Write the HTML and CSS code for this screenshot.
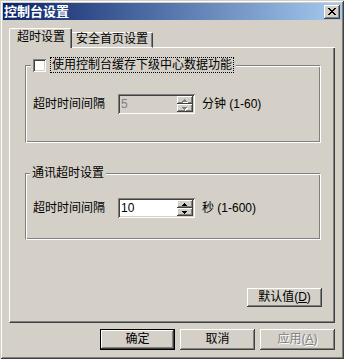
FILE: index.html
```html
<!DOCTYPE html>
<html>
<head>
<meta charset="utf-8">
<link rel="stylesheet" href="styles.css">
</head>
<body>
<div class="window">
  <div class="titlebar">
    <span class="title">控制台设置</span>
    <span class="close"><svg width="8" height="7" viewBox="0 0 8 7" shape-rendering="crispEdges"><path d="M0 0h2v1H0zM6 0h2v1H6zM1 1h2v1H1zM5 1h2v1H5zM2 2h4v1H2zM3 3h2v1H3zM2 4h4v1H2zM1 5h2v1H1zM5 5h2v1H5zM0 6h2v1H0zM6 6h2v1H6z" fill="#000"/></svg></span>
  </div>
  <div class="tabs">
    <div class="tab active">超时设置</div>
    <div class="tab">安全首页设置</div>
    <div class="tab-fill"></div>
  </div>
  <div class="panel">
    <div class="group g1">
      <div class="legend check-legend">
        <span class="checkbox"></span>
        <span class="focus">使用控制台缓存下级中心数据功能</span>
      </div>
      <div class="row r1">
        <span class="label">超时时间间隔</span>
        <div class="spin disabled">
          <span class="value">5</span>
          <span class="updown">
            <span class="arrow"><svg width="5" height="3" viewBox="0 0 5 3" shape-rendering="crispEdges"><path d="M2 0h1v1h1v1h1v1H0V2h1V1h1z"/></svg></span>
            <span class="arrow"><svg width="5" height="3" viewBox="0 0 5 3" shape-rendering="crispEdges"><path d="M0 0h5v1H4v1H3v1H2V2H1V1H0z"/></svg></span>
          </span>
        </div>
        <span class="unit">分钟 (1-60)</span>
      </div>
    </div>
    <div class="group g2">
      <div class="legend text-legend">通讯超时设置</div>
      <div class="row r2">
        <span class="label">超时时间间隔</span>
        <div class="spin">
          <span class="value">10</span>
          <span class="updown">
            <span class="arrow"><svg width="5" height="3" viewBox="0 0 5 3" shape-rendering="crispEdges"><path d="M2 0h1v1h1v1h1v1H0V2h1V1h1z"/></svg></span>
            <span class="arrow"><svg width="5" height="3" viewBox="0 0 5 3" shape-rendering="crispEdges"><path d="M0 0h5v1H4v1H3v1H2V2H1V1H0z"/></svg></span>
          </span>
        </div>
        <span class="unit">秒 (1-600)</span>
      </div>
    </div>
    <div class="btn btn-defaults">默认值(<u>D</u>)</div>
  </div>
  <div class="buttons">
    <div class="btn btn-main default">确定</div>
    <div class="btn btn-main">取消</div>
    <div class="btn btn-main off">应用(<u>A</u>)</div>
  </div>
</div>
</body>
</html>
```

FILE: styles.css
```css
* { box-sizing: border-box; }
html, body { margin: 0; padding: 0; }
body {
  width: 344px;
  height: 359px;
  background: #d4d0c8;
  font-family: "Liberation Sans", "Noto Sans CJK SC", sans-serif;
  font-size: 12px;
  color: #000;
  overflow: hidden;
}
.window {
  width: 344px;
  height: 359px;
  padding: 3px 2px 3px 3px;
  background: #d4d0c8;
  box-shadow: inset 1px 1px #d4d0c8, inset -1px -1px #404040, inset 2px 2px #fff, inset -2px -2px #808080;
  display: flex;
  flex-direction: column;
}
.titlebar {
  height: 17px;
  display: flex;
  align-items: center;
  justify-content: space-between;
  background: linear-gradient(to right, #0a246a, #a6caf0);
  padding-left: 1px;
}
.title {
  color: #fff;
  font-weight: bold;
  font-size: 13px;
  line-height: 15px;
}
.close {
  width: 16px;
  height: 14px;
  margin-right: 2px;
  background: #d4d0c8;
  box-shadow: inset -1px -1px #404040, inset 1px 1px #fff, inset -2px -2px #808080;
  display: flex;
  align-items: center;
  justify-content: center;
  padding: 0 1px 1px 0;
}
.close svg { display: block; }

.tabs {
  margin-top: 8px;
  margin-left: 6px;
  width: 326px;
  height: 20px;
  display: flex;
  align-items: flex-end;
}
.tab {
  background: #d4d0c8;
  border-top: 1px solid #fff;
  border-right: 1px solid #404040;
  border-radius: 2px 2px 0 0;
  box-shadow: inset -1px 0 #808080;
  white-space: nowrap;
}
.tab.active {
  width: 63px;
  height: 20px;
  border-left: 1px solid #fff;
  padding: 1px 0 0 7px;
  line-height: 14px;
}
.tab:not(.active) {
  width: 81px;
  height: 16px;
  padding-left: 4px;
  line-height: 12px;
  border-bottom: 1px solid #fff;
  border-top-left-radius: 0;
}
.tab-fill {
  flex: 1;
  border-bottom: 1px solid #fff;
}

.panel {
  margin-left: 6px;
  width: 326px;
  height: 275px;
  border-left: 1px solid #fff;
  border-right: 1px solid #404040;
  border-bottom: 1px solid #404040;
  box-shadow: inset -1px -1px #808080;
  display: flex;
  flex-direction: column;
  align-items: flex-start;
}
.group {
  width: 296px;
  margin-left: 15px;
  border-top: 1px solid #808080;
  border-left: 1px solid #808080;
  border-right: 1px solid #fff;
  border-bottom: 1px solid #fff;
  box-shadow: inset 1px 1px #fff, inset -1px -1px #808080;
  display: flex;
  flex-direction: column;
  align-items: flex-start;
}
.g1 { margin-top: 17px; padding-bottom: 28px; }
.g2 { margin-top: 30px; padding-bottom: 21px; }
.legend {
  background: #d4d0c8;
  padding: 0 2px;
  white-space: nowrap;
}
.check-legend {
  margin-top: -9px;
  margin-left: 5px;
  height: 16px;
  display: flex;
  align-items: center;
}
.checkbox {
  width: 13px;
  height: 13px;
  background: #fff;
  box-shadow: inset 1px 1px #808080, inset -1px -1px #fff, inset 2px 2px #404040, inset -2px -2px #d4d0c8;
}
.focus {
  margin-left: 4px;
  height: 16px;
  border: 1px dotted #000;
  padding: 0 1px;
  line-height: 14px;
}
.text-legend {
  margin-top: -8px;
  margin-left: 4px;
  line-height: 14px;
}
.row {
  margin-left: 7px;
  height: 20px;
  display: flex;
  align-items: center;
  white-space: nowrap;
}
.r1 { margin-top: 21px; }
.r2 { margin-top: 18px; }
.label {
  width: 85px;
  line-height: 14px;
}
.spin {
  width: 77px;
  height: 20px;
  padding: 2px;
  background: #fff;
  box-shadow: inset 1px 1px #808080, inset -1px -1px #fff, inset 2px 2px #404040, inset -2px -2px #d4d0c8;
  display: flex;
}
.spin.disabled { background: #d4d0c8; }
.value {
  flex: 1;
  padding-left: 1px;
  line-height: 16px;
}
.spin.disabled .value { color: #808080; }
.updown {
  width: 16px;
  display: flex;
  flex-direction: column;
}
.arrow {
  height: 8px;
  background: #d4d0c8;
  box-shadow: inset -1px -1px #404040, inset 1px 1px #fff, inset -2px -2px #808080;
  display: flex;
  align-items: center;
  justify-content: center;
  padding-right: 1px;
}
.arrow svg { display: block; fill: #000; }
.spin.disabled .arrow svg { fill: #808080; filter: drop-shadow(1px 1px 0 #fff); }
.unit {
  margin-left: 7px;
  line-height: 14px;
}

.btn {
  background: #d4d0c8;
  box-shadow: inset -1px -1px #404040, inset 1px 1px #fff, inset -2px -2px #808080;
  display: flex;
  align-items: center;
  justify-content: center;
  white-space: nowrap;
  line-height: 14px;
}
.btn-defaults {
  width: 75px;
  height: 19px;
  margin-top: 48px;
  align-self: flex-end;
  margin-right: 12px;
  padding-bottom: 1px;
}
.buttons {
  margin-top: 6px;
  margin-right: 7px;
  display: flex;
  justify-content: flex-end;
  gap: 5px;
}
.btn-main {
  width: 75px;
  height: 21px;
  padding-bottom: 1px;
}
.btn-main.default {
  border: 1px solid #000;
}
.btn-main.off {
  color: #808080;
  text-shadow: 1px 1px 0 #fff;
}
```
